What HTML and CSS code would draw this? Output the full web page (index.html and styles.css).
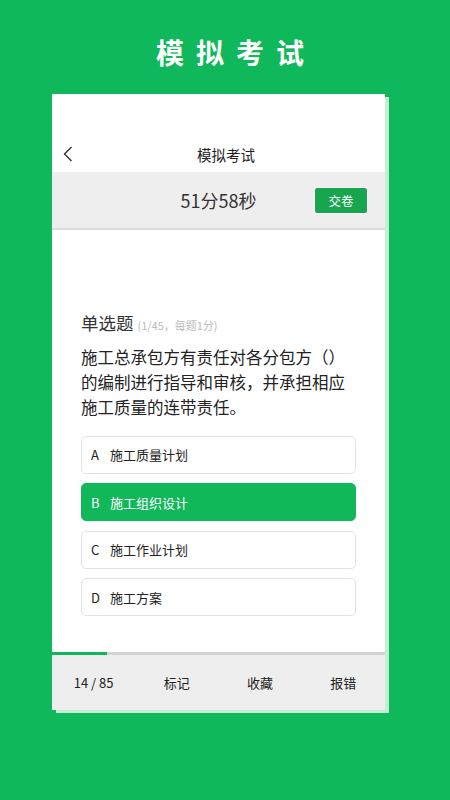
FILE: index.html
```html
<!DOCTYPE html>
<html lang="zh-CN">
<head>
    <meta charset="UTF-8">
    <meta name="viewport" content="width=device-width, initial-scale=1.0">
    <title>模拟考试</title>
    <link rel="stylesheet" href="styles.css">
</head>
<body>
    <div class="page">
        <h1 class="banner">模拟考试</h1>

        <div class="phone">
            <div class="status"></div>

            <div class="nav">
                <svg class="back" width="10" height="16" viewBox="0 0 10 16">
                    <polyline points="8.5,1 1.5,8 8.5,15" fill="none" stroke="#333" stroke-width="1.4"/>
                </svg>
                <div class="nav-title">模拟考试</div>
            </div>

            <div class="timer-bar">
                <span></span>
                <span class="timer">51分58秒</span>
                <a class="submit" href="#">交卷</a>
            </div>

            <div class="content">
                <div class="q-type">单选题 <span class="q-info">(1/45，每题1分)</span></div>
                <p class="q-text">施工总承包方有责任对各分包方（）的编制进行指导和审核，并承担相应施工质量的连带责任。</p>

                <ul class="options">
                    <li class="option"><span class="letter">A</span>施工质量计划</li>
                    <li class="option selected"><span class="letter">B</span>施工组织设计</li>
                    <li class="option"><span class="letter">C</span>施工作业计划</li>
                    <li class="option"><span class="letter">D</span>施工方案</li>
                </ul>
            </div>

            <div class="progress">
                <div class="progress-fill" style="width: 16.5%"></div>
            </div>

            <div class="toolbar">
                <span>14 / 85</span>
                <span>标记</span>
                <span>收藏</span>
                <span>报错</span>
            </div>
        </div>
    </div>
</body>
</html>
```

FILE: styles.css
```css
body {
    margin: 0;
    padding: 0;
    background-color: #0fb85b;
    font-family: "Noto Sans CJK SC", "Noto Sans", sans-serif;
    color: #333;
}

.page {
    height: 800px;
    overflow: hidden;
}

.banner {
    margin: 0;
    padding-top: 34px;
    height: 60px;
    line-height: 36px;
    font-size: 28px;
    font-weight: bold;
    letter-spacing: 12px;
    text-indent: 22px;
    text-align: center;
    color: #fff;
}

.phone {
    margin-left: 52px;
    width: 333px;
    height: 616px;
    background-color: #fff;
    display: flex;
    flex-direction: column;
    box-shadow: 4px 3px 0 #c4efd6;
}

.status {
    height: 42px;
}

.nav {
    height: 36px;
    display: flex;
    align-items: center;
    padding-left: 11px;
    padding-right: 6px;
}

.back {
    display: block;
}

.nav-title {
    flex: 1;
    text-align: center;
    font-size: 14.5px;
    color: #222;
}

.timer-bar {
    height: 56px;
    background-color: #eeeeee;
    border-bottom: 2px solid #dcdcdc;
    display: grid;
    grid-template-columns: 1fr auto 1fr;
    align-items: center;
}

.timer {
    font-size: 18px;
    color: #333;
}

.submit {
    justify-self: end;
    margin-right: 18px;
    width: 52px;
    height: 25px;
    line-height: 25px;
    text-align: center;
    background-color: #17a64e;
    color: #fff;
    font-size: 12.5px;
    text-decoration: none;
    border-radius: 2px;
    box-shadow: 0 0 0 1px #fff;
}

.content {
    flex: 1;
    padding: 80px 29px 0 29px;
}

.q-type {
    font-size: 17.5px;
    line-height: 26px;
    color: #333;
}

.q-info {
    font-size: 11px;
    color: #bbb;
}

.q-text {
    margin: 7px 0 0 0;
    font-size: 16.5px;
    line-height: 25px;
    color: #222;
}

.options {
    list-style-type: none;
    margin: 15.5px 0 0 0;
    padding: 0;
    display: flex;
    flex-direction: column;
    gap: 9.5px;
}

.option {
    height: 38px;
    box-sizing: border-box;
    border: 1px solid #e3e3e3;
    border-radius: 5px;
    display: flex;
    align-items: center;
    padding-left: 9px;
    font-size: 13px;
    color: #222;
}

.option.selected {
    background-color: #10b85a;
    border-color: #10b85a;
    color: #fff;
}

.letter {
    width: 19px;
}

.progress {
    height: 3px;
    background-color: #d3d3d3;
}

.progress-fill {
    height: 100%;
    background-color: #10b85a;
}

.toolbar {
    height: 55px;
    background-color: #eeeeee;
    display: grid;
    grid-template-columns: repeat(4, 1fr);
    align-items: center;
    text-align: center;
    font-size: 13px;
    color: #222;
}
```
